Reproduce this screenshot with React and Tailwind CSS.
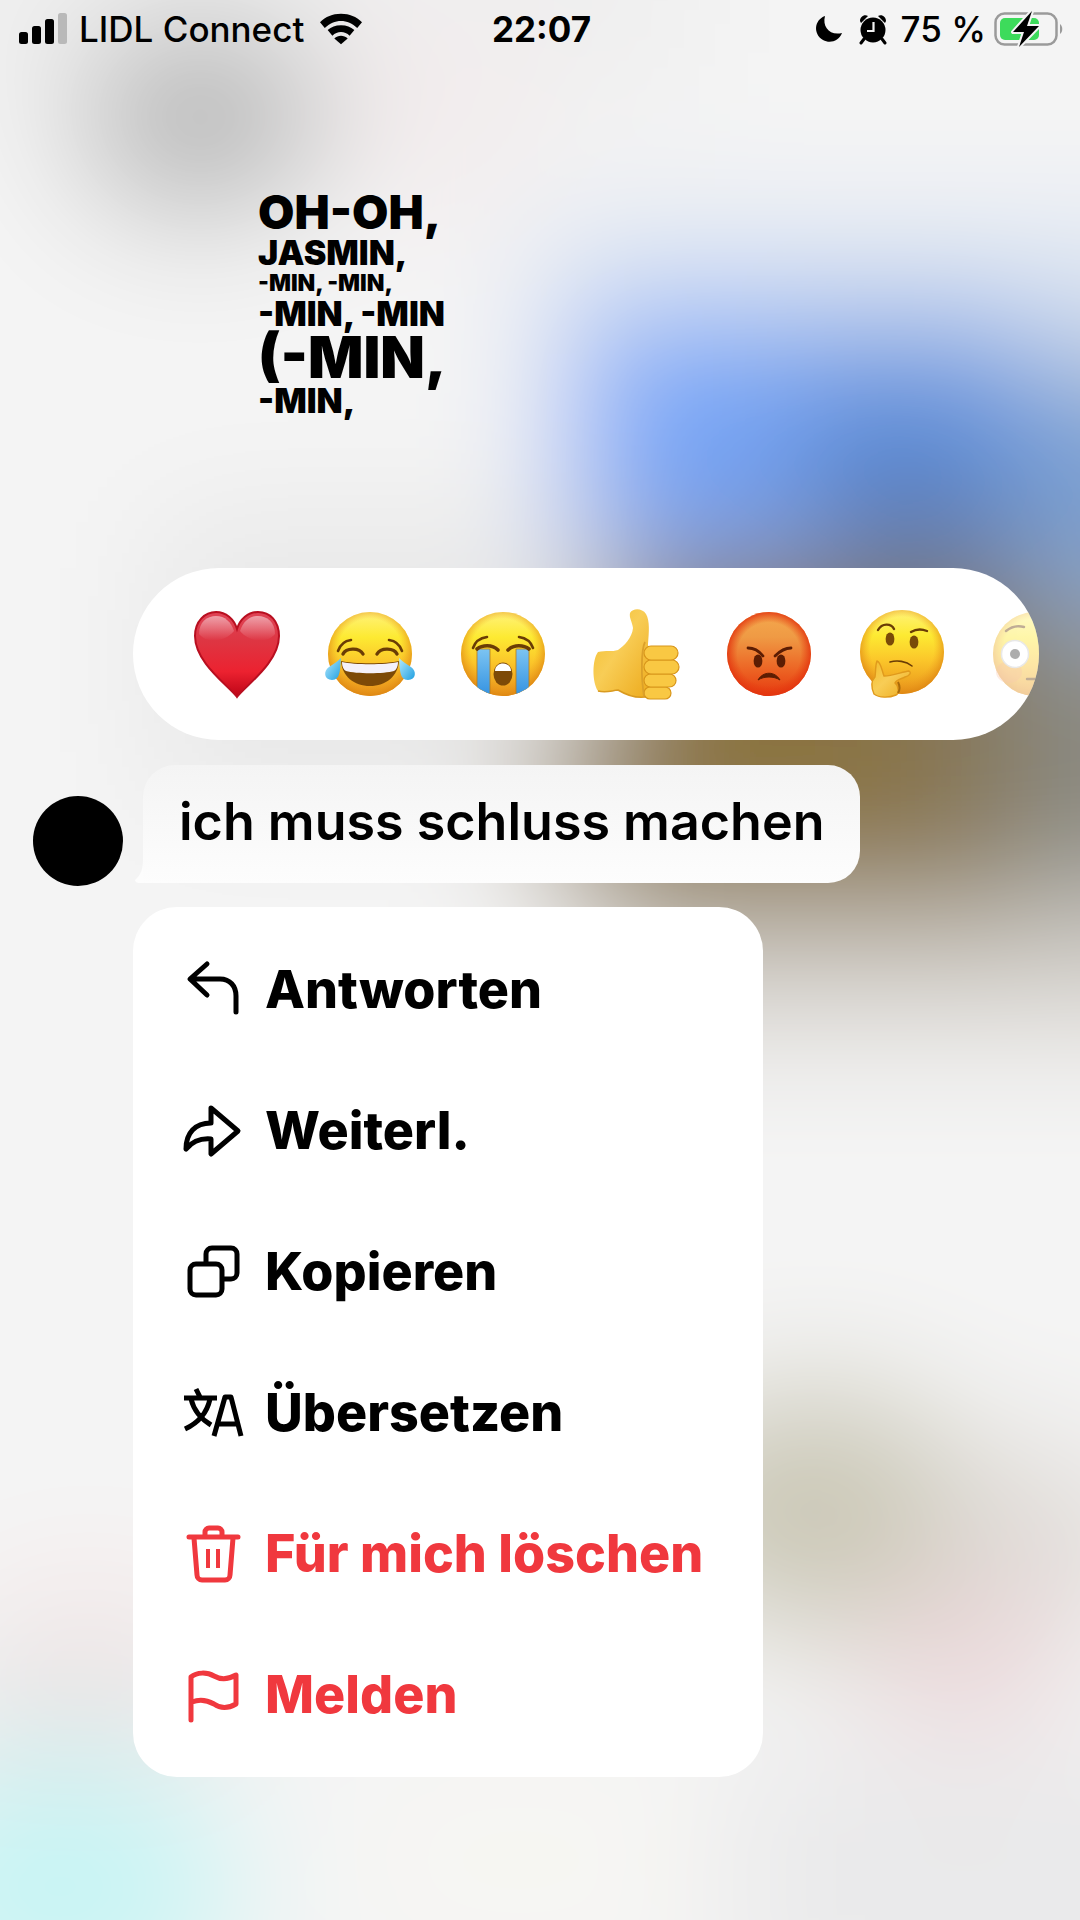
import React, { useState } from 'react';
import clsx from 'clsx';

// Soft, out-of-focus chat that lies behind the context menu
const Backdrop = () => (
  <svg
    aria-hidden="true"
    className="absolute inset-0 h-full w-full"
    viewBox="0 0 1080 1920"
    preserveAspectRatio="none"
  >
    <defs>
      <filter id="soft" filterUnits="userSpaceOnUse" x="-300" y="-300" width="1680" height="2520">
        <feGaussianBlur stdDeviation="66" />
      </filter>
    </defs>
    <rect width="1080" height="1920" fill="#f4f4f4" />
    <g filter="url(#soft)">
      <rect x="-300" y="-300" width="1680" height="2520" fill="#f4f4f4" />
      <rect x="-300" y="-300" width="1000" height="400" fill="#efefef" />
      <ellipse cx="200" cy="120" rx="125" ry="100" fill="#b8b8b8" />
      <ellipse cx="440" cy="110" rx="90" ry="110" fill="#f3ebec" />
      <rect x="160" y="520" width="400" height="280" fill="#e7e7e7" />
      <rect x="540" y="230" width="840" height="100" fill="#d5e1f2" />
      <rect x="570" y="320" width="230" height="240" fill="#76a4f6" />
      <rect x="800" y="325" width="230" height="230" fill="#6595e2" />
      <rect x="1030" y="360" width="350" height="250" fill="#7ca0d0" />
      <ellipse cx="890" cy="465" rx="100" ry="50" fill="#4f80ca" />
      <rect x="600" y="565" width="440" height="345" fill="#877450" />
      <rect x="540" y="700" width="80" height="200" fill="#a3947c" />
      <rect x="830" y="525" width="180" height="95" fill="#69717f" />
      <rect x="680" y="690" width="190" height="110" fill="#8f7330" />
      <rect x="1010" y="620" width="370" height="280" fill="#8a8a82" />
      <rect x="600" y="910" width="780" height="120" fill="#d2cec7" />
      <ellipse cx="815" cy="1510" rx="165" ry="125" fill="#cbc8b6" />
      <ellipse cx="1040" cy="1540" rx="110" ry="100" fill="#e0dcd8" />
      <ellipse cx="965" cy="1660" rx="105" ry="70" fill="#ecd6d9" />
      <rect x="740" y="1750" width="640" height="260" fill="#e9e9ea" />
      <ellipse cx="90" cy="1630" rx="120" ry="50" fill="#f4e6e6" />
      <rect x="-60" y="1680" width="280" height="60" fill="#dcdfe0" />
      <ellipse cx="60" cy="1890" rx="180" ry="130" fill="#c8f4f4" />
      <ellipse cx="520" cy="1860" rx="170" ry="80" fill="#f7f6f2" />
    </g>
  </svg>
);

const EmojiDefs = () => (
  <svg aria-hidden="true" className="absolute h-0 w-0">
    <defs>
      <linearGradient id="face" x1="0" y1="0" x2="0" y2="1">
        <stop offset="0" stopColor="#fff27a" />
        <stop offset="0.3" stopColor="#fdea32" />
        <stop offset="0.6" stopColor="#fbc62a" />
        <stop offset="1" stopColor="#e8921a" />
      </linearGradient>
      <radialGradient id="rim" cx="0.5" cy="0.46" r="0.54">
        <stop offset="0.7" stopColor="#f0a020" stopOpacity="0" />
        <stop offset="1" stopColor="#dd8612" stopOpacity="0.9" />
      </radialGradient>
      <linearGradient id="anger" x1="0" y1="0" x2="0" y2="1">
        <stop offset="0" stopColor="#f4a94e" />
        <stop offset="0.3" stopColor="#ef9a44" />
        <stop offset="0.7" stopColor="#ec6223" />
        <stop offset="1" stopColor="#e6390f" />
      </linearGradient>
      <radialGradient id="angerRim" cx="0.5" cy="0.5" r="0.5">
        <stop offset="0.75" stopColor="#e6390f" stopOpacity="0" />
        <stop offset="1" stopColor="#e2340f" stopOpacity="0.85" />
      </radialGradient>
      <linearGradient id="heartRed" x1="0" y1="0" x2="0" y2="1">
        <stop offset="0" stopColor="#df4456" />
        <stop offset="0.35" stopColor="#de3542" />
        <stop offset="0.7" stopColor="#ec2230" />
        <stop offset="1" stopColor="#bd0416" />
      </linearGradient>
      <linearGradient id="shine" x1="0" y1="0" x2="0" y2="1">
        <stop offset="0" stopColor="#ffffff" stopOpacity="0.5" />
        <stop offset="1" stopColor="#ffffff" stopOpacity="0" />
      </linearGradient>
      <linearGradient id="skin" x1="0" y1="0" x2="1" y2="1">
        <stop offset="0" stopColor="#f3bd2a" />
        <stop offset="0.45" stopColor="#f8cd56" />
        <stop offset="1" stopColor="#edaa1c" />
      </linearGradient>
      <linearGradient id="tear" x1="0" y1="0" x2="0" y2="1">
        <stop offset="0" stopColor="#7cc4f2" />
        <stop offset="1" stopColor="#2f8fe0" />
      </linearGradient>
      <linearGradient id="drop" x1="0" y1="0" x2="1" y2="1">
        <stop offset="0" stopColor="#b5eaff" />
        <stop offset="1" stopColor="#1f9fe0" />
      </linearGradient>
      <clipPath id="faceClip">
        <circle cx="46" cy="46" r="42" />
      </clipPath>
    </defs>
  </svg>
);

const Face = ({ cy = 46 }) => (
  <>
    <circle cx="46" cy={cy} r="42" fill="url(#face)" />
    <circle cx="46" cy={cy} r="42" fill="url(#rim)" />
  </>
);

const Heart = () => (
  <>
    <path
      d="M46 89C38 78 4 55 4 28C4 13 14 4 25 4C35 4 43 11 46 21C49 11 57 4 67 4C79 4 88 13 88 28C88 55 54 78 46 89Z"
      fill="url(#heartRed)"
      stroke="#b80f20"
      strokeWidth="2"
    />
    <path d="M8 26C8 14 16 8 25 8C34 8 40 14 43 23C34 34 16 36 8 26Z" fill="url(#shine)" />
    <path d="M84 26C84 14 76 8 67 8C58 8 52 14 49 23C58 34 76 36 84 26Z" fill="url(#shine)" />
  </>
);

const Joy = () => (
  <>
    <Face />
    <g fill="none" stroke="#6a3c05" strokeWidth="2.6" strokeLinecap="round">
      <path d="M14 43C16 37 20 33 27 32" />
      <path d="M78 43C76 37 72 33 65 32" />
      <path d="M19 46C22 40 35 39 39 46" strokeWidth="3.4" />
      <path d="M73 46C70 40 57 39 53 46" strokeWidth="3.4" />
    </g>
    <path d="M17 53C28 56 64 56 75 53C74 68 62 78 46 78C30 78 18 68 17 53Z" fill="#7d4a07" />
    <path d="M18 54C30 57 62 57 74 54C74 59 72 62 70 63C60 66 32 66 22 63C20 62 18 59 18 54Z" fill="#f4f1fa" />
    <path d="M17 50C16 60 17 72 8 72C0 72 -1 63 5 59C9 56 13 54 17 50Z" fill="url(#drop)" />
    <path d="M75 50C76 60 75 72 84 72C92 72 93 63 87 59C83 56 79 54 75 50Z" fill="url(#drop)" />
  </>
);

const Sob = () => (
  <>
    <Face />
    <g clipPath="url(#faceClip)">
      <rect x="20" y="41" width="13" height="50" fill="url(#tear)" stroke="#b57a1c" strokeWidth="0.8" />
      <rect x="59" y="41" width="13" height="50" fill="url(#tear)" stroke="#b57a1c" strokeWidth="0.8" />
    </g>
    <g fill="none" stroke="#6a3c05" strokeWidth="2.6" strokeLinecap="round">
      <path d="M16 40C18 34 23 30 30 29" />
      <path d="M76 40C74 34 69 30 62 29" />
      <path d="M20 41C25 37 35 36 41 42" strokeWidth="3.6" />
      <path d="M72 41C67 37 57 36 51 42" strokeWidth="3.6" />
    </g>
    <ellipse cx="46" cy="66" rx="9.5" ry="11.5" fill="#7d4a07" />
    <path d="M38 63C38 53 54 53 54 63Z" fill="#ffffff" />
  </>
);

const ThumbsUp = () => (
  <>
    <path
      d="M8 44C16 42 22 44 28 42C34 38 42 30 43 20C42 13 39 10 40 5C43 0 52 0 56 6C60 13 59 24 58 36L60 88C50 91 38 88 28 82C20 83 16 85 8 83C2 74 2 52 8 44Z"
      fill="url(#skin)"
    />
    <path d="M8 83C16 85 20 83 28 82C38 88 50 91 60 88" fill="none" stroke="#d99a20" strokeWidth="1.6" />
    <g fill="#f9c843" stroke="#d8951a" strokeWidth="1.2">
      <rect x="54" y="79" width="27" height="12" rx="6" />
      <rect x="54" y="66" width="32" height="13" rx="6.5" />
      <rect x="54" y="52" width="35" height="14" rx="7" />
      <rect x="54" y="38" width="34" height="14" rx="7" />
    </g>
    <path d="M55 34C51 42 51 70 54 88" fill="none" stroke="#dba02a" strokeWidth="1.8" />
  </>
);

const Angry = () => (
  <>
    <circle cx="46" cy="46" r="42" fill="url(#anger)" />
    <circle cx="46" cy="46" r="42" fill="url(#angerRim)" />
    <g fill="none" stroke="#5c1d03" strokeWidth="2.8" strokeLinecap="round">
      <path d="M25 40C30 40 36 43 40 48" />
      <path d="M68 40C63 40 57 43 52 48" />
    </g>
    <ellipse cx="35" cy="53" rx="4.4" ry="6.6" fill="#5c1d03" />
    <ellipse cx="58" cy="53" rx="4.4" ry="6.6" fill="#5c1d03" />
    <path d="M35 72C40 63 52 63 57 72C51 68 41 68 35 72Z" fill="#5c1d03" stroke="#5c1d03" strokeWidth="1" />
  </>
);

const Thinking = () => (
  <>
    <Face cy={44} />
    <g fill="none" stroke="#6a3c05" strokeWidth="2.4" strokeLinecap="round">
      <path d="M22 22C26 15 35 15 38 21" />
      <path d="M55 24C60 21 66 21 71 23" />
      <path d="M34 54C41 52 50 53 56 58" strokeWidth="1.6" />
    </g>
    <ellipse cx="34" cy="31" rx="4.4" ry="6.6" fill="#7a4a08" />
    <ellipse cx="58" cy="34" rx="4.4" ry="6.6" fill="#7a4a08" />
    <path
      d="M21 53C25 54 26 63 28 68C36 68 46 64 53 63C56 65 53 68 49 69C45 71 40 72 39 75C43 78 43 86 40 87C33 90 23 90 18 86C15 79 15 73 19 69C20 63 19 58 21 53Z"
      fill="url(#skin)"
      stroke="#e09a1c"
      strokeWidth="1.4"
    />
    <path d="M42 74C44 78 44 82 42 85" fill="none" stroke="#a86a0a" strokeWidth="2" />
  </>
);

const Flushed = () => (
  <g opacity="0.42">
    <Face />
    <ellipse cx="20" cy="64" rx="13" ry="11" fill="#ef7d43" opacity="0.35" />
    <circle cx="26" cy="46" r="13.5" fill="#ffffff" stroke="#c9c9c9" strokeWidth="1.5" />
    <circle cx="26" cy="46" r="5" fill="#3d3d3d" />
    <circle cx="66" cy="46" r="13.5" fill="#ffffff" />
    <path d="M17 23C22 19 28 17 35 19" fill="none" stroke="#6a3c05" strokeWidth="2.4" strokeLinecap="round" />
    <path d="M38 71H54" fill="none" stroke="#6a3c05" strokeWidth="2.4" strokeLinecap="round" />
  </g>
);

const reactions = [
  { label: 'Herz', Art: Heart },
  { label: 'Freudentränen', Art: Joy },
  { label: 'Weinen', Art: Sob },
  { label: 'Daumen hoch', Art: ThumbsUp },
  { label: 'Wütend', Art: Angry },
  { label: 'Nachdenklich', Art: Thinking },
  { label: 'Errötet', Art: Flushed },
];

const ReplyIcon = () => (
  <path d="M26 6L9 21L26 37M10 21H39C49 21 55 28 55 38V54" />
);

const ForwardIcon = () => (
  <path d="M30 9L57 32L30 55V40C19 39 11 43 5 50C5 34 14 24 30 24Z" />
);

const CopyIcon = () => (
  <>
    <rect x="9" y="24" width="32" height="31" rx="6" />
    <path d="M25 23V14a6 6 0 0 1 6-6h19a6 6 0 0 1 6 6v19a6 6 0 0 1-6 6h-8" />
  </>
);

const TranslateIcon = () => (
  <g strokeLinecap="butt">
    <path d="M15 8L19 16M3 17H36M10 18C13 30 20 38 30 44M29 18C26 32 17 42 4 48" />
    <path d="M33 55L44 16H50L60 55M37 43H57" />
  </g>
);

const TrashIcon = () => (
  <>
    <path d="M8 15H57M24 14V10a4 4 0 0 1 4-4h9a4 4 0 0 1 4 4v4" />
    <path d="M13 16L16 53a5 5 0 0 0 5 5h23a5 5 0 0 0 5-5L52 16" />
    <path d="M27 27V46M37 27V46" strokeWidth="4" strokeLinecap="butt" />
  </>
);

const FlagIcon = () => (
  <path d="M10 57V14C16 9 26 9 33 13C40 17 48 16 55 12V41C48 45 40 46 33 41C26 37 18 36 11 39" />
);

const menuItems = [
  { label: 'Antworten', Icon: ReplyIcon },
  { label: 'Weiterl.', Icon: ForwardIcon },
  { label: 'Kopieren', Icon: CopyIcon },
  { label: 'Übersetzen', Icon: TranslateIcon },
  { label: 'Für mich löschen', Icon: TrashIcon, danger: true },
  { label: 'Melden', Icon: FlagIcon, danger: true },
];

const StatusBar = () => (
  <header className="grid h-[58px] grid-cols-[1fr_auto_1fr] items-center pl-[19px] pr-4 text-[35px] leading-none">
    <div className="flex items-center gap-3">
      <svg className="h-8 w-12" viewBox="0 0 48 32" aria-label="Signal">
        <rect x="0" y="19" width="9" height="12" rx="2.5" />
        <rect x="13" y="13" width="9" height="18" rx="2.5" />
        <rect x="26" y="6" width="9" height="25" rx="2.5" />
        <rect x="39" y="0" width="9" height="31" rx="2.5" fill="#b9b9b9" />
      </svg>
      <span className="font-medium">LIDL Connect</span>
      <svg className="ml-1 h-8 w-[42px]" viewBox="0 0 44 32" aria-label="WLAN">
        <path d="M22 0C13 0 6 3 0 9L5 15C15 5 29 5 39 15L44 9C38 3 31 0 22 0Z" />
        <path d="M22 12C16 12 12 14 8 17L13 23C18 18 26 18 31 23L36 17C32 14 28 12 22 12Z" />
        <path d="M22 32L15 26C19 22 25 22 29 26Z" />
      </svg>
    </div>
    <time className="font-bold">22:07</time>
    <div className="flex items-center justify-end">
      <svg className="mr-3 h-8 w-8" viewBox="0 0 32 32" aria-label="Nicht stören">
        <path d="M12 3C9 14 17 23 29 20C26 28 17 31 10 27C0 21 1 7 12 3Z" />
      </svg>
      <svg className="mr-3 h-8 w-8" viewBox="0 0 32 32" aria-label="Wecker">
        <circle cx="16" cy="17" r="12.5" />
        <path d="M3 8C3 4 7 1 11 3L4 10ZM29 8C29 4 25 1 21 3L28 10Z" />
        <path d="M7 26L4 30M25 26L28 30" stroke="#000" strokeWidth="3" strokeLinecap="round" />
        <path d="M16.5 9V18H10" fill="none" stroke="#f2f2f2" strokeWidth="2.2" />
      </svg>
      <span className="mr-2 font-medium">75 %</span>
      <svg className="h-9 w-[70px]" viewBox="0 0 70 36" aria-label="Akku lädt">
        <rect x="1.5" y="2.5" width="61" height="31" rx="9" fill="none" stroke="#9a9a9a" strokeWidth="2.5" />
        <path d="M66 13C69 15 69 21 66 23Z" fill="#9a9a9a" />
        <rect x="6" y="7" width="39" height="22" rx="5" fill="#3ddb5b" />
        <path
          d="M38 0L19 21H30L25 36L45 15H33Z"
          stroke="#f4f4f4"
          strokeWidth="4"
          strokeLinejoin="round"
          paintOrder="stroke"
        />
      </svg>
    </div>
  </header>
);

const Lyrics = () => (
  <p className="ml-[258px] mt-[129px] font-black whitespace-nowrap">
    <span className="block text-[47px] leading-[49px]">OH-OH,</span>
    <span className="block text-[34px] leading-[33px]">JASMIN,</span>
    <span className="block text-[23px] leading-[28px]">-MIN, -MIN,</span>
    <span className="block text-[34px] leading-[34px]">-MIN, -MIN</span>
    <span className="block text-[58px] leading-[53px]">(-MIN,</span>
    <span className="block text-[34px] leading-[34px]">-MIN,</span>
  </p>
);

const App = () => {
  const [reaction, setReaction] = useState(null);

  return (
    <main className="relative min-h-screen overflow-hidden bg-[#f4f4f4] font-['Inter','Liberation_Sans',sans-serif] text-black">
      <Backdrop />
      <EmojiDefs />

      <div className="relative">
        <StatusBar />
        <Lyrics />

        {/* Reactions */}
        <div className="ml-[133px] mr-[41px] mt-[150px] flex h-[172px] items-center gap-[41px] overflow-hidden rounded-full bg-white pl-[58px]">
          {reactions.map(({ label, Art }) => (
            <button
              key={label}
              type="button"
              aria-label={label}
              aria-pressed={reaction === label}
              onClick={() => setReaction(label)}
              className="shrink-0"
            >
              <svg className="h-[92px] w-[92px] overflow-visible" viewBox="0 0 92 92">
                <Art />
              </svg>
            </button>
          ))}
        </div>

        {/* Message */}
        <div className="mt-[25px] flex items-end pl-[33px]">
          <div className="size-[90px] rounded-full bg-black" />
          <div className="relative mb-[3px] ml-5 flex h-[118px] items-center rounded-[32px] rounded-bl-none bg-gradient-to-b from-[#f4f4f4] to-[#fdfdfd] px-9 pb-1">
            <svg className="absolute bottom-0 -left-2 h-6 w-2" viewBox="0 0 8 24" aria-hidden="true">
              <path d="M8 0C8 10 6 16 0 21C0 23 2 24 4 24H8Z" fill="#fdfdfd" />
            </svg>
            <p className="text-[52px] leading-none font-semibold whitespace-nowrap">ich muss schluss machen</p>
          </div>
        </div>

        {/* Context menu */}
        <ul className="ml-[133px] mt-[21px] w-[630px] rounded-[44px] bg-white py-3">
          {menuItems.map(({ label, Icon, danger }) => (
            <li key={label}>
              <button
                type="button"
                className={clsx(
                  'flex h-[141px] w-full items-center gap-5 pl-12 text-left text-[52px] leading-none font-extrabold whitespace-nowrap',
                  danger ? 'text-[#f0383e]' : 'text-black'
                )}
              >
                <svg
                  className="size-16 shrink-0"
                  viewBox="0 0 64 64"
                  fill="none"
                  stroke="currentColor"
                  strokeWidth="5"
                  strokeLinecap="round"
                  strokeLinejoin="round"
                  aria-hidden="true"
                >
                  <Icon />
                </svg>
                {label}
              </button>
            </li>
          ))}
        </ul>
      </div>
    </main>
  );
};

export default App;
